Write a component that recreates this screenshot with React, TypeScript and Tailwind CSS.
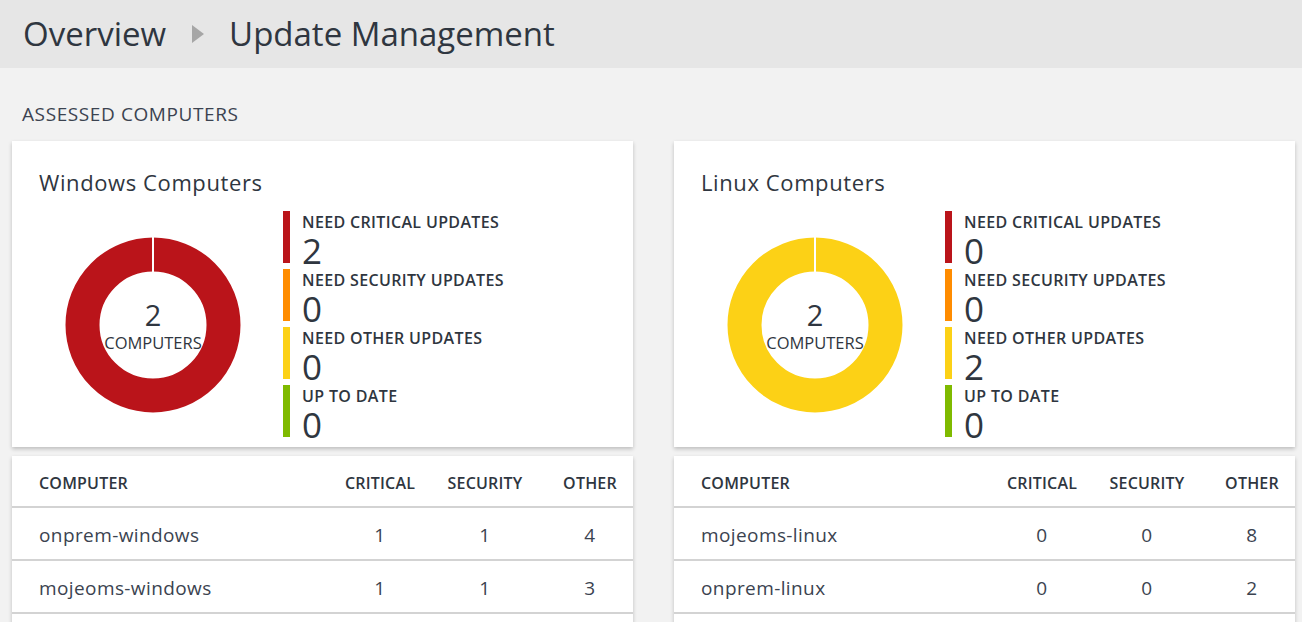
import React from "react";

const RED = "#ba141a";
const ORANGE = "#ff8c00";
const YELLOW = "#fcd116";
const GREEN = "#7fba00";

type Item = { label: string; value: number; color: string };

function Donut({ color }: { color: string }) {
  return (
    <div className="relative w-[176px] h-[176px]">
      <svg width="176" height="176" viewBox="0 0 176 176" className="absolute inset-0">
        <circle cx="88" cy="88" r="70.5" fill="none" stroke={color} strokeWidth="34" />
        <rect x="87" y="0" width="2" height="40" fill="#ffffff" />
      </svg>
      <div className="absolute inset-0 flex flex-col items-center justify-center text-[#2f3640] pt-[6px]">
        <div className="text-[29px] leading-[30px] mt-[-3px]">2</div>
        <div className="text-[16.5px] leading-[20px] mt-[3px]">COMPUTERS</div>
      </div>
    </div>
  );
}

function StatCard({ title, color, items }: { title: string; color: string; items: Item[] }) {
  return (
    <div className="bg-white h-[306px] shadow-[0_2px_4px_rgba(0,0,0,0.22)] pl-[27px] pt-[26px]">
      <div className="text-[22px] leading-[30px] text-[#2f3640] tracking-[0.6px]">{title}</div>
      <div className="flex mt-[14px]">
        <div className="w-[244px] pl-[26px] pt-[26px]">
          <Donut color={color} />
        </div>
        <div className="flex flex-col gap-[6px]">
          {items.map((it) => (
            <div key={it.label} className="flex h-[52px]">
              <div className="w-[7px] h-full" style={{ background: it.color }} />
              <div className="pl-[12px] text-[#2f3640]">
                <div className="text-[16px] leading-[18px] mt-[2px] font-semibold tracking-[0.35px]">{it.label}</div>
                <div className="text-[35px] leading-[28px] mt-[6px]">{it.value}</div>
              </div>
            </div>
          ))}
        </div>
      </div>
    </div>
  );
}

function TableCard({ rows }: { rows: [string, number, number, number][] }) {
  const grid = "grid grid-cols-[1fr_80px_80px_80px] gap-x-[25px] pl-[27px] pr-[3px] items-center";
  return (
    <div className="bg-white shadow-[0_2px_4px_rgba(0,0,0,0.22)]">
      <div className={`${grid} h-[52px] pt-[3px] border-b-2 border-[#d3d3d3] text-[16px] font-semibold text-[#2f3640] tracking-[0.2px]`}>
        <div>COMPUTER</div>
        <div className="text-center">CRITICAL</div>
        <div className="text-center">SECURITY</div>
        <div className="text-center">OTHER</div>
      </div>
      {rows.map((r) => (
        <div key={r[0]} className={`${grid} h-[53px] pt-[3px] border-b-2 border-[#d3d3d3] text-[19px] text-[#3b4350] tracking-[0.4px]`}>
          <div>{r[0]}</div>
          <div className="text-center">{r[1]}</div>
          <div className="text-center">{r[2]}</div>
          <div className="text-center">{r[3]}</div>
        </div>
      ))}
      <div className="h-[20px]" />
    </div>
  );
}

export default function App() {
  const font = { fontFamily: '"Open Sans", "Noto Sans", sans-serif' };
  return (
    <div className="w-[1302px] h-[622px] overflow-hidden bg-[#f2f2f2]" style={font}>
      <div className="h-[68px] bg-[#e6e6e6] flex items-center pl-[23px] text-[#2f3640]">
        <span className="text-[33px] leading-[40px] mt-[-1px]">Overview</span>
        <svg width="14" height="20" viewBox="0 0 14 20" className="ml-[25px] mr-[24px]">
          <polygon points="1,1 13,10 1,19" fill="#a6a6a6" />
        </svg>
        <span className="text-[33px] leading-[40px] mt-[-1px]">Update Management</span>
      </div>
      <div className="pl-[22px] pt-[33px] h-[73px] text-[19px] leading-[26px] text-[#3b4350] tracking-[0.6px]">
        ASSESSED COMPUTERS
      </div>
      <div className="grid grid-cols-[621px_621px] gap-x-[41px] pl-[12px]">
        <div className="flex flex-col gap-[9px]">
          <StatCard
            title="Windows Computers"
            color={RED}
            items={[
              { label: "NEED CRITICAL UPDATES", value: 2, color: RED },
              { label: "NEED SECURITY UPDATES", value: 0, color: ORANGE },
              { label: "NEED OTHER UPDATES", value: 0, color: YELLOW },
              { label: "UP TO DATE", value: 0, color: GREEN },
            ]}
          />
          <TableCard
            rows={[
              ["onprem-windows", 1, 1, 4],
              ["mojeoms-windows", 1, 1, 3],
            ]}
          />
        </div>
        <div className="flex flex-col gap-[9px]">
          <StatCard
            title="Linux Computers"
            color={YELLOW}
            items={[
              { label: "NEED CRITICAL UPDATES", value: 0, color: RED },
              { label: "NEED SECURITY UPDATES", value: 0, color: ORANGE },
              { label: "NEED OTHER UPDATES", value: 2, color: YELLOW },
              { label: "UP TO DATE", value: 0, color: GREEN },
            ]}
          />
          <TableCard
            rows={[
              ["mojeoms-linux", 0, 0, 8],
              ["onprem-linux", 0, 0, 2],
            ]}
          />
        </div>
      </div>
    </div>
  );
}
